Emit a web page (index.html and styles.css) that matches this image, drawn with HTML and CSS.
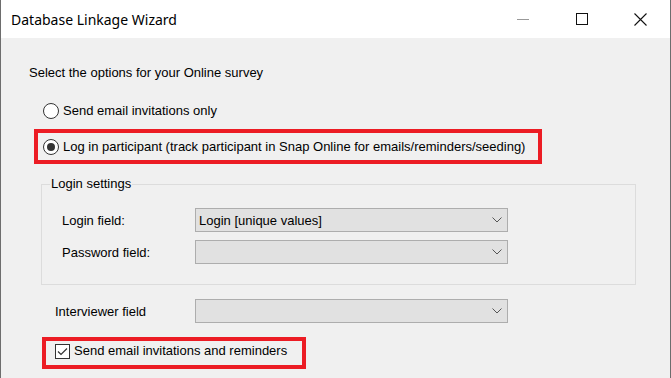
FILE: index.html
```html
<!DOCTYPE html>
<html lang="en">
<head>
  <meta charset="UTF-8">
  <title>Database Linkage Wizard</title>
  <link rel="stylesheet" href="styles.css">
</head>
<body>
  <div class="window">
    <div class="titlebar">
      <span class="title">Database Linkage Wizard</span>
      <div class="caption-buttons">
        <span class="cap-btn">
          <svg width="12" height="12" viewBox="0 0 12 12"><line x1="0" y1="6.5" x2="12" y2="6.5" stroke="#999" stroke-width="1"/></svg>
        </span>
        <span class="cap-btn">
          <svg width="12" height="12" viewBox="0 0 12 12"><rect x="0.5" y="0.5" width="11" height="11" fill="none" stroke="#111" stroke-width="1"/></svg>
        </span>
        <span class="cap-btn">
          <svg width="13" height="13" viewBox="0 0 13 13"><path d="M0.5 0.5 L12.5 12.5 M12.5 0.5 L0.5 12.5" stroke="#111" stroke-width="1.1"/></svg>
        </span>
      </div>
    </div>

    <div class="content">
      <p class="intro">Select the options for your Online survey</p>

      <label class="option first-option"><span class="radio"></span>Send email invitations only</label>

      <div class="highlight highlight-login">
        <label class="option"><span class="radio checked"></span>Log in participant (track participant in Snap Online for emails/reminders/seeding)</label>
      </div>

      <fieldset class="group">
        <legend>Login settings</legend>
        <div class="field-row">
          <span class="field-label">Login field:</span>
          <div class="combo">
            <span>Login [unique values]</span>
            <svg class="chevron" width="10" height="6" viewBox="0 0 10 6"><path d="M0.5 0.5 L5 5 L9.5 0.5" fill="none" stroke="#555" stroke-width="1"/></svg>
          </div>
        </div>
        <div class="field-row">
          <span class="field-label">Password field:</span>
          <div class="combo">
            <span></span>
            <svg class="chevron" width="10" height="6" viewBox="0 0 10 6"><path d="M0.5 0.5 L5 5 L9.5 0.5" fill="none" stroke="#555" stroke-width="1"/></svg>
          </div>
        </div>
      </fieldset>

      <div class="field-row interviewer-row">
        <span class="field-label">Interviewer field</span>
        <div class="combo">
          <span></span>
          <svg class="chevron" width="10" height="6" viewBox="0 0 10 6"><path d="M0.5 0.5 L5 5 L9.5 0.5" fill="none" stroke="#555" stroke-width="1"/></svg>
        </div>
      </div>

      <div class="highlight highlight-reminders">
        <label class="option">
          <span class="checkbox">
            <svg width="13" height="13" viewBox="0 0 13 13"><path d="M2 6.5 L5 9.5 L11 3.5" fill="none" stroke="#333" stroke-width="1.2"/></svg>
          </span>Send email invitations and reminders
        </label>
      </div>
    </div>
  </div>
</body>
</html>
```

FILE: styles.css
```css
* { box-sizing: border-box; }
body { margin: 0; background-color: #f0f0f0; font-family: "Liberation Sans", Arial, sans-serif; font-size: 13px; color: #000; }
.window { width: 671px; height: 378px; overflow: hidden; background-color: #f0f0f0; border-left: 1px solid #6d6d6d; border-right: 1px solid #6d6d6d; }

/* Title bar */
.titlebar { height: 38px; background-color: #fff; display: flex; align-items: center; justify-content: space-between; }
.title { font-family: "Noto Sans", sans-serif; font-size: 14px; padding-left: 10px; color: #000; }
.caption-buttons { display: flex; height: 100%; }
.cap-btn { width: 59px; height: 100%; display: flex; align-items: center; justify-content: center; }

/* Dialog content */
.content { padding: 27px 0 0 28px; }
.intro { margin: 0; line-height: 16px; }

.option { display: flex; align-items: center; line-height: 16px; white-space: nowrap; }
.first-option { height: 20px; margin: 20px 0 0 14px; }

.radio { width: 16px; height: 16px; border: 1px solid #333; border-radius: 50%; background-color: #fff; margin-right: 4px; display: flex; align-items: center; justify-content: center; flex-shrink: 0; }
.radio.checked::after { content: ""; width: 8px; height: 8px; border-radius: 50%; background-color: #333; }

.checkbox { width: 15px; height: 15px; border: 1px solid #333; background-color: #fff; margin-right: 4px; display: flex; align-items: center; justify-content: center; flex-shrink: 0; }

.highlight { border: 4px solid #ec1c24; }
.highlight-login { width: 508px; margin: 8px 0 0 5px; padding: 6px 0 5px 5px; }
.highlight-reminders { width: 264px; margin: 14px 0 0 13px; padding: 2px 0 6px 9px; }

/* Login settings group */
.group { width: 595px; margin: 12px 0 0 12px; padding: 16px 0 20px 0; border: 1px solid #dcdcdc; min-width: 0; }
.group legend { margin-left: 8px; padding: 0 1px; line-height: 16px; }
.group .field-row { padding-left: 20px; }
.group .field-row + .field-row { margin-top: 8px; }

.field-row { display: grid; grid-template-columns: 133px 313px; align-items: center; }
.interviewer-row { margin-top: 14px; padding-left: 26px; grid-template-columns: 140px 313px; }

.combo { height: 24px; border: 1px solid #adadad; background-color: #e1e1e1; display: flex; align-items: center; justify-content: space-between; padding: 0 5px 0 3px; }
.chevron { flex-shrink: 0; }
```
